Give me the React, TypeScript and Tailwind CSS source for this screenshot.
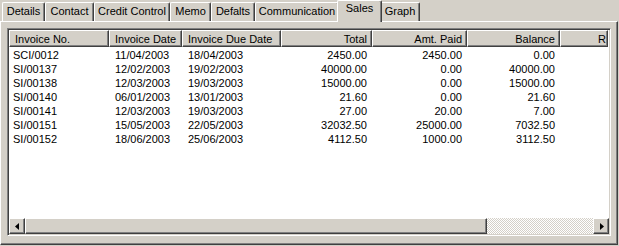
const tabs = [
  { label: "Details", w: "w-[43px]" },
  { label: "Contact", w: "w-[49px]" },
  { label: "Credit Control", w: "w-[76px]" },
  { label: "Memo", w: "w-[41px]" },
  { label: "Defalts", w: "w-[44px]" },
  { label: "Communication", w: "w-[84px]" },
  { label: "Sales", w: "w-[45px]", active: true },
  { label: "Graph", w: "w-[40px]" },
];

const columns = [
  { label: "Invoice No.", w: "w-[100px]", right: false },
  { label: "Invoice Date", w: "w-[73px]", right: false },
  { label: "Invoice Due Date", w: "w-[99px]", right: false },
  { label: "Total", w: "w-[91px]", right: true },
  { label: "Amt. Paid", w: "w-[95px]", right: true },
  { label: "Balance", w: "w-[93px]", right: true },
];

const rows = [
  ["SCI/0012", "11/04/2003", "18/04/2003", "2450.00", "2450.00", "0.00"],
  ["SI/00137", "12/02/2003", "19/02/2003", "40000.00", "0.00", "40000.00"],
  ["SI/00138", "12/03/2003", "19/03/2003", "15000.00", "0.00", "15000.00"],
  ["SI/00140", "06/01/2003", "13/01/2003", "21.60", "0.00", "21.60"],
  ["SI/00141", "12/03/2003", "19/03/2003", "27.00", "20.00", "7.00"],
  ["SI/00151", "15/05/2003", "22/05/2003", "32032.50", "25000.00", "7032.50"],
  ["SI/00152", "18/06/2003", "25/06/2003", "4112.50", "1000.00", "3112.50"],
];

// classic win32 raised edge
const raised =
  "border border-white border-r-[#404040] border-b-[#404040] shadow-[inset_-1px_-1px_0_#808080]";

function Arrow({ dir }: { dir: "left" | "right" }) {
  return (
    <svg width="4" height="7" viewBox="0 0 4 7" className="block">
      {dir === "left" ? (
        <path d="M4 0 L0 3.5 L4 7 Z" fill="#000" />
      ) : (
        <path d="M0 0 L4 3.5 L0 7 Z" fill="#000" />
      )}
    </svg>
  );
}

export default function App() {
  return (
    <div className="w-[619px] h-[246px] overflow-hidden bg-[#d4d0c8] pt-[2px] text-[11px] leading-none text-black font-['Liberation_Sans',Arial,sans-serif]">
      {/* Tab strip */}
      <div className="flex h-[19px] pl-[2px]">
        {tabs.map((t) =>
          t.active ? (
            <div
              key={t.label}
              className={`${t.w} relative z-10 -mx-[2px] -mt-[2px] h-[22px] shrink-0 rounded-t-[2px] border-t border-l border-r border-white border-r-[#404040] bg-[#d4d0c8] shadow-[inset_-1px_0_0_#808080] flex justify-center pt-[2px]`}
            >
              {t.label}
            </div>
          ) : (
            <div
              key={t.label}
              className={`${t.w} h-[19px] shrink-0 rounded-t-[2px] border-t border-l border-r border-white border-r-[#404040] shadow-[inset_-1px_0_0_#808080] flex justify-center pt-[3px]`}
            >
              {t.label}
            </div>
          )
        )}
      </div>

      {/* Tab page */}
      <div className="w-[618px] h-[224px] border border-white border-r-[#404040] border-b-[#404040] shadow-[inset_-1px_-1px_0_#808080] pt-[6px] pl-[6px]">
        {/* List view */}
        <div className="w-[604px] h-[208px] border border-[#808080] border-r-white border-b-white shadow-[inset_1px_1px_0_#404040,inset_-1px_-1px_0_#d4d0c8] p-[1px]">
          <div className="w-[600px] h-[204px] bg-white flex flex-col overflow-hidden">
            {/* Header */}
            <div className="flex h-[17px] shrink-0">
              {columns.map((c) => (
                <div
                  key={c.label}
                  className={`${c.w} ${raised} shrink-0 bg-[#d4d0c8] flex items-center pt-[1px] whitespace-nowrap ${
                    c.right ? "justify-end pr-[4px]" : "pl-[5px]"
                  }`}
                >
                  {c.label}
                </div>
              ))}
              <div className={`w-[48px] ${raised} shrink-0 bg-[#d4d0c8] flex items-center pt-[1px] justify-end pr-[1px] overflow-hidden`}>
                R
              </div>
            </div>

            {/* Rows */}
            <div className="flex-1 pt-[1px]">
              {rows.map((r) => (
                <div key={r[0]} className="flex h-[14px] items-center whitespace-nowrap">
                  {columns.map((c, i) => (
                    <div
                      key={c.label}
                      className={`${c.w} shrink-0 ${
                        c.right ? "text-right pr-[5px]" : i === 0 ? "pl-[4px]" : "pl-[6px]"
                      }`}
                    >
                      {r[i]}
                    </div>
                  ))}
                </div>
              ))}
            </div>

            {/* Horizontal scrollbar */}
            <div className="flex h-[16px] shrink-0 bg-[#d4d0c8]">
              <div className={`w-[16px] ${raised} flex items-center justify-center pr-[1px]`}>
                <Arrow dir="left" />
              </div>
              <div className={`w-[462px] ${raised}`} />
              <div className="flex-1 bg-[repeating-conic-gradient(#d4d0c8_0%_25%,#ffffff_0%_50%)] bg-[length:2px_2px]" />
              <div className={`w-[16px] ${raised} flex items-center justify-center pl-[1px]`}>
                <Arrow dir="right" />
              </div>
            </div>
          </div>
        </div>
      </div>
    </div>
  );
}
